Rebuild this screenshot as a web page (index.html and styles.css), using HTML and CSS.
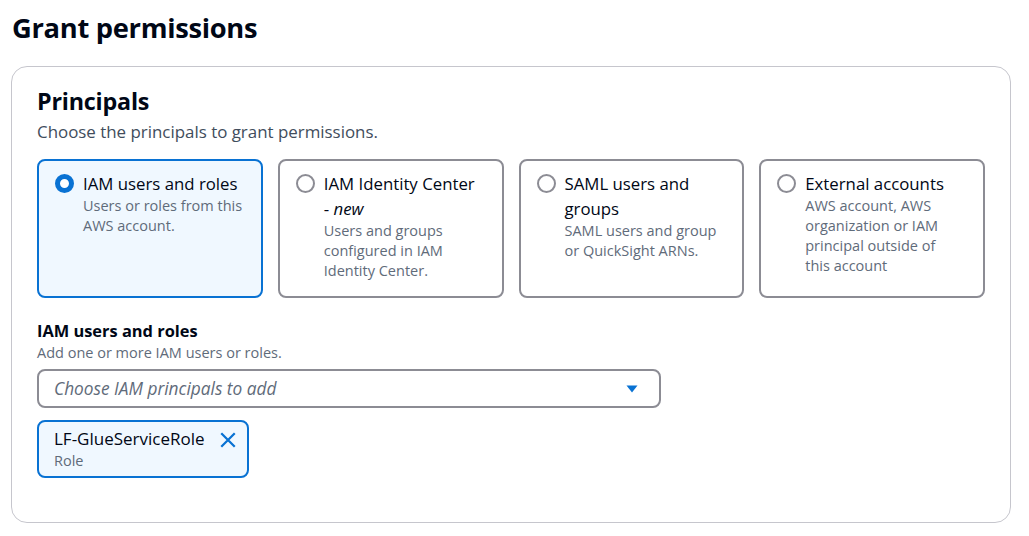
FILE: index.html
```html
<!DOCTYPE html>
<html lang="en">
<head>
<meta charset="utf-8">
<title>Grant permissions</title>
<link rel="stylesheet" href="styles.css">
</head>
<body>
<div class="page">
  <h1 class="title">Grant permissions</h1>
  <section class="panel">
    <h2 class="panel-title">Principals</h2>
    <p class="panel-desc">Choose the principals to grant permissions.</p>
    <div class="cards">
      <label class="card selected">
        <span class="radio checked"></span>
        <span class="card-body">
          <span class="card-label">IAM users and roles</span>
          <span class="card-desc">Users or roles from this AWS account.</span>
        </span>
      </label>
      <label class="card">
        <span class="radio"></span>
        <span class="card-body">
          <span class="card-label">IAM Identity Center<br>- <em>new</em></span>
          <span class="card-desc">Users and groups configured in IAM Identity Center.</span>
        </span>
      </label>
      <label class="card">
        <span class="radio"></span>
        <span class="card-body">
          <span class="card-label">SAML users and groups</span>
          <span class="card-desc">SAML users and group or QuickSight ARNs.</span>
        </span>
      </label>
      <label class="card">
        <span class="radio"></span>
        <span class="card-body">
          <span class="card-label">External accounts</span>
          <span class="card-desc">AWS account, AWS organization or IAM principal outside of<br>this account</span>
        </span>
      </label>
    </div>
    <div class="field">
      <div class="field-label">IAM users and roles</div>
      <div class="field-desc">Add one or more IAM users or roles.</div>
      <div class="select">
        <span class="placeholder">Choose IAM principals to add</span>
        <svg class="caret" width="16" height="16" viewBox="0 0 16 16"><path d="M2.5 4.5h11l-5.5 7z" fill="#0972d3"/></svg>
      </div>
      <div class="token">
        <div class="token-text">
          <div class="token-name">LF-GlueServiceRole</div>
          <div class="token-type">Role</div>
        </div>
        <svg class="token-x" width="18" height="18" viewBox="0 0 16 16"><path d="M2 2l12 12M14 2L2 14" stroke="#0972d3" stroke-width="2" fill="none"/></svg>
      </div>
    </div>
  </section>
</div>
</body>
</html>
```
FILE: styles.css
```css
* { box-sizing: border-box; }
body {
  margin: 0;
  background: #ffffff;
  font-family: "Open Sans", "Noto Sans", Arial, sans-serif;
  color: #000716;
}
.page {
  padding: 10px 18px 0 11px;
}
.title {
  margin: 0 0 20px 1px;
  font-size: 27.3px;
  line-height: 36px;
  font-weight: 700;
  letter-spacing: -0.3px;
}
.panel {
  border: 1px solid #c6c6cd;
  border-radius: 16px;
  padding: 19px 25px 44px 25px;
}
.panel-title {
  margin: 0;
  font-size: 23.3px;
  line-height: 30px;
  font-weight: 700;
  letter-spacing: -0.2px;
}
.panel-desc {
  margin: 4px 0 15px;
  font-size: 16.9px;
  line-height: 24px;
  color: #414d5c;
}
.cards {
  display: grid;
  grid-template-columns: repeat(4, 1fr);
  gap: 15px;
}
.card {
  display: flex;
  gap: 9px;
  height: 139px;
  border: 2px solid #8c8c94;
  border-radius: 8px;
  padding: 10px 16px 10px 16px;
  background: #fff;
}
.card.selected {
  border-color: #0972d3;
  background: #f0f8ff;
}
.radio {
  flex: none;
  width: 19px;
  height: 19px;
  margin-top: 3px;
  border: 2px solid #8c8c94;
  border-radius: 50%;
  background: #fff;
}
.radio.checked {
  border: 5.5px solid #0972d3;
}
.card-body {
  display: flex;
  flex-direction: column;
}
.card-label {
  font-size: 16.8px;
  line-height: 25px;
  color: #000716;
}
.card-label em { font-style: italic; }
.card-desc {
  font-size: 14.5px;
  line-height: 20px;
  color: #5f6b7a;
}
.field { margin-top: 22px; }
.field-label {
  font-size: 16.4px;
  line-height: 22px;
  font-weight: 700;
}
.field-desc {
  font-size: 14.5px;
  line-height: 20px;
  color: #5f6b7a;
  margin-top: 1px;
}
.select {
  margin-top: 6px;
  width: 624px;
  height: 39px;
  border: 2px solid #8c8c94;
  border-radius: 8px;
  display: flex;
  align-items: center;
  justify-content: space-between;
  padding: 0 19px 0 15px;
}
.placeholder {
  font-size: 17.3px;
  font-style: italic;
  color: #5f6b7a;
}
.caret { display: block; }
.token {
  margin-top: 12px;
  width: 212px;
  height: 58px;
  border: 2px solid #0972d3;
  border-radius: 8px;
  background: #f0f8ff;
  display: flex;
  justify-content: space-between;
  align-items: flex-start;
  padding: 6px 10px 0 15px;
}
.token-name {
  font-size: 17px;
  line-height: 22px;
}
.token-type {
  font-size: 14.5px;
  line-height: 20px;
  color: #5f6b7a;
  margin-top: 1px;
}
.token-x { margin-top: 3px; }
```
